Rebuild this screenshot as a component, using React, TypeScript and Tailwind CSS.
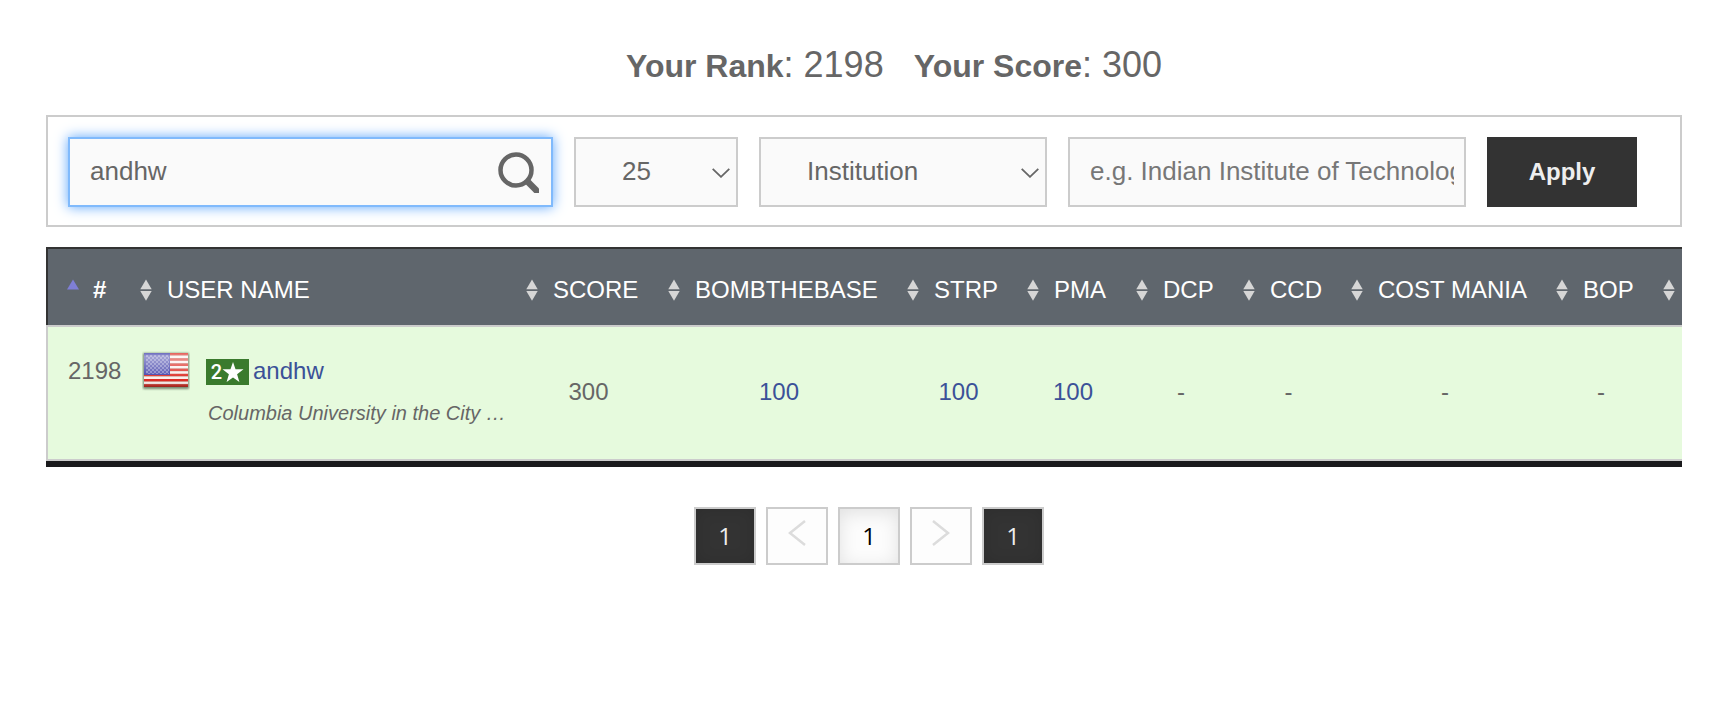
import React from "react";

const control = "h-[70px] border-2 border-[#cccccc] bg-[#fafafa] pb-px text-[26px] text-[#666666] outline-none";

function SortIcon({ active = false }: { active?: boolean }) {
  return (
    <svg width="12" height="22" viewBox="0 0 12 22" className="shrink-0" aria-hidden="true">
      {active ? (
        <path d="M6 .5L12 10.500H0Z" fill="#7f7fd6" />
      ) : (
        <g fill="#d6d6d6">
          <path d="M6 .5L11.700 10.300H.3Z" />
          <path d="M6 21.700L11.700 11.900H.3Z" />
        </g>
      )}
    </svg>
  );
}

function Chevron() {
  return (
    <svg width="18" height="10" viewBox="0 0 18 10" className="pointer-events-none absolute top-[31px] right-2" fill="none" stroke="#666" strokeWidth="1.800" aria-hidden="true">
      <path d="M.7 .8L9 8.800L17.300 .8" />
    </svg>
  );
}

function Flag() {
  const stripes = [0, 1, 2, 3, 4, 5, 6, 7, 8, 9, 10, 11, 12];
  return (
    <svg width="48" height="40" viewBox="0 0 48 40" role="img" aria-label="United States" className="shrink-0">
      <defs>
        <linearGradient id="gloss" x1="0" y1="0" x2="0" y2="1">
          <stop offset="0" stopColor="#fff" stopOpacity=".25" />
          <stop offset=".1" stopColor="#fff" stopOpacity=".5" />
          <stop offset=".6" stopColor="#fff" stopOpacity=".15" />
          <stop offset=".8" stopColor="#fff" stopOpacity="0" />
          <stop offset="1" stopColor="#000" stopOpacity=".3" />
        </linearGradient>
        <pattern id="stars" width="4" height="4" patternUnits="userSpaceOnUse">
          <rect width="4" height="4" fill="#4a4aad" />
          <rect width="2" height="2" fill="#8080c6" />
          <rect x="2" y="2" width="2" height="2" fill="#8080c6" />
        </pattern>
        <filter id="soft" x="-10%" y="-10%" width="120%" height="120%">
          <feGaussianBlur stdDeviation="1" />
        </filter>
      </defs>
      <rect x="1" y="2" width="46" height="36" rx="1" fill="#4a5a45" opacity=".7" filter="url(#soft)" />
      {stripes.map((i) => (
        <rect key={i} x="2" y={2 + i * 2.6} width="44" height="2.7" fill={i % 2 ? "#fbeeec" : "#dc2a22"} />
      ))}
      <rect x="2" y="2" width="26" height="22" fill="#3b3ba8" />
      <rect x="4" y="4" width="23" height="19" fill="url(#stars)" />
      <rect x="2" y="2" width="44" height="34" fill="url(#gloss)" />
    </svg>
  );
}

const columns = [
  { name: "#", width: "w-[74px]" },
  { name: "USER NAME", width: "w-[386px]" },
  { name: "SCORE", width: "w-[142px]" },
  { name: "BOMBTHEBASE", width: "w-[239px]" },
  { name: "STRP", width: "w-[120px]" },
  { name: "PMA", width: "w-[109px]" },
  { name: "DCP", width: "w-[107px]" },
  { name: "CCD", width: "w-[108px]" },
  { name: "COST MANIA", width: "w-[205px]" },
  { name: "BOP", width: "w-[107px]" },
  { name: "", width: "w-[150px]" },
];

const results = ["100", "100", "100", "-", "-", "-", "-"];

const pageBox = "flex h-[58px] w-[62px] items-center justify-center border-2 border-[#cccccc]";
const pageDark = "bg-[#333333] text-[#eeeeee] shadow-[inset_0_0_16px_rgba(0,0,0,0.12)]";

function Arrow({ d }: { d: string }) {
  return (
    <svg width="18" height="26" viewBox="0 0 18 26" fill="none" stroke="#dcdcdc" strokeWidth="2.500" className="mb-[6px]" aria-hidden="true">
      <path d={d} />
    </svg>
  );
}

export default function App() {
  return (
    <main className="bg-white px-[46px] pt-[43px] pr-[38px] font-['Liberation_Sans',Arial,sans-serif] text-[#666666]">
      <h1 className="pl-[60px] text-center text-[36px] leading-[44px]">
        <b className="text-[32px]">Your Rank</b>: 2198 &nbsp; <b className="text-[32px]">Your Score</b>: 300
      </h1>

      <form className="mt-[27px] flex gap-[21px] border-2 border-[#cccccc] px-5 pt-5 pb-[18px]" onSubmit={(e) => e.preventDefault()}>
        <div className="relative w-[485px]">
          <input
            aria-label="User name"
            defaultValue="andhw"
            className="h-[70px] w-full border-2 border-[#80bafc] bg-[#fafafa] pr-16 pb-px pl-5 text-[26px] text-[#666666] shadow-[0_0_12px_#5ea6fb] outline-none"
          />
          <button type="submit" aria-label="Search" className="absolute top-[15px] right-[14px]">
            <svg width="41" height="41" viewBox="0 0 41 41" fill="none" stroke="#666" aria-hidden="true">
              <circle cx="18" cy="18" r="15.500" strokeWidth="4.500" />
              <path d="M28 28L41 41" strokeWidth="6.500" />
            </svg>
          </button>
        </div>
        <div className="relative w-[164px]">
          <select aria-label="Rows per page" className={`${control} w-full appearance-none pl-[46px]`}>
            <option>25</option>
          </select>
          <Chevron />
        </div>
        <div className="relative w-[288px]">
          <select aria-label="Filter by" className={`${control} w-full appearance-none pl-[46px]`}>
            <option>Institution</option>
          </select>
          <Chevron />
        </div>
        <input
          aria-label="Institution"
          placeholder="e.g. Indian Institute of Technology"
          className={`${control} w-[398px] px-5 pr-[10px] placeholder:text-[#777777]`}
        />
        <button className="h-[70px] w-[150px] bg-[#333333] text-2xl font-bold text-[#eeeeee]">Apply</button>
      </form>

      <div className="mt-5 overflow-hidden">
        <table className="w-[1747px] table-fixed border-separate border-spacing-0 text-2xl">
          <thead>
            <tr className="bg-[#5f666d] text-white">
              {columns.map((c, i) => (
                <th
                  key={i}
                  scope="col"
                  className={`${c.width} h-[78px] border-t-2 border-[#333333] p-0 text-left font-normal whitespace-nowrap first:border-l-2 first:font-bold`}
                >
                  <button
                    aria-label={c.name ? undefined : "Sort"}
                    className={`flex items-center pt-[6px] ${i === 0 ? "gap-[14px] pl-[19px]" : "gap-[15px] pl-5"}`}
                  >
                    <SortIcon active={i === 0} />
                    {c.name}
                  </button>
                </th>
              ))}
            </tr>
          </thead>
          <tbody>
            <tr className="bg-[#e6fadd] [&>td]:border-y-2 [&>td]:border-[#cccccc]">
              <td className="h-[136px] border-l-2 p-0 pt-[26px] pl-5 align-top leading-9">2198</td>
              <td className="p-0 pt-[25px] pl-[22px] align-top">
                <div className="flex gap-4">
                  <div className="-mt-px h-10">
                    <Flag />
                  </div>
                  <div>
                    <div className="flex h-[38px] items-center gap-1">
                      <span className="mt-[2px] flex h-[26px] w-[43px] items-center justify-center bg-[#3a7a2d] font-['Roboto',sans-serif] text-xl font-medium text-white">
                        2
                        <svg width="22" height="21" viewBox="0 0 20 20" fill="currentColor" role="img" aria-label="stars">
                          <path d="M10 0L12.400 7H20L13.900 11.700L16.100 19L10 14.700L3.900 19L6.100 11.700L0 7H7.600Z" />
                        </svg>
                      </span>
                      <a href="#andhw" className="text-[#3b5198]">andhw</a>
                    </div>
                    <p className="mt-[9px] ml-[2px] text-xl leading-7 italic">Columbia University in the City …</p>
                  </div>
                </div>
              </td>
              <td className="p-0 pb-[2px] pl-[23px] text-center">300</td>
              {results.map((r, i) => (
                <td key={i} className="p-0 pb-[2px] pl-[23px] text-center">
                  {r === "-" ? r : <a href="#solution" className="text-[#3b5198]">{r}</a>}
                </td>
              ))}
              <td className="p-0" />
            </tr>
          </tbody>
        </table>
        <div className="h-[6px] bg-[#1a1a1c]" />
      </div>

      <nav aria-label="Pagination" className="mt-10 flex justify-center gap-[10px] pl-[10px] font-['Open_Sans',sans-serif] text-2xl">
        <button className={`${pageBox} ${pageDark}`}>1</button>
        <button aria-label="Previous page" className={`${pageBox} bg-[#fdfdfd]`}>
          <Arrow d="M17 1L2 13L17 25" />
        </button>
        <button aria-current="page" className={`${pageBox} bg-[#fcfcfc] text-black shadow-[inset_0_4px_18px_rgba(0,0,0,0.11)]`}>1</button>
        <button aria-label="Next page" className={`${pageBox} bg-[#fdfdfd]`}>
          <Arrow d="M1 1L16 13L1 25" />
        </button>
        <button className={`${pageBox} ${pageDark}`}>1</button>
      </nav>
    </main>
  );
}
